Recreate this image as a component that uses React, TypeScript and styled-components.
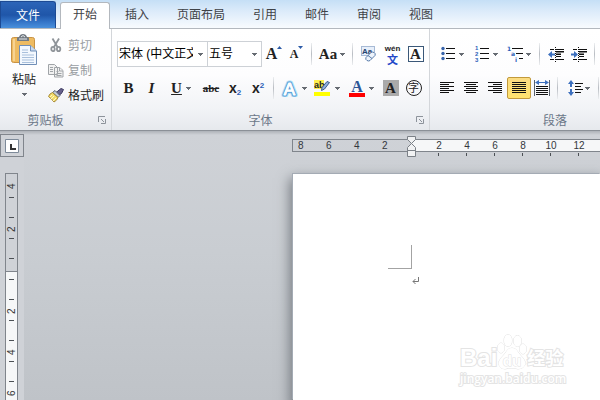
import React from "react";
import styled, { createGlobalStyle, css } from "styled-components";

const uiFont = `"Liberation Sans", "Noto Sans CJK SC", sans-serif`;

const GlobalStyle = createGlobalStyle`
  * { box-sizing: border-box; }
  html, body, #root { height: 100%; }
  body {
    margin: 0;
    overflow: hidden;
    font-family: "Noto Sans CJK SC", sans-serif;
    font-size: 12px;
    line-height: 16px;
    color: #333;
  }
  button {
    margin: 0;
    padding: 0;
    border: 0;
    background: none;
    font: inherit;
    color: inherit;
  }
  svg { display: block; flex: none; }
`;

const Window = styled.div`
  display: flex;
  flex-direction: column;
  height: 100vh;
`;

/* ---------- tabs ---------- */

const TabBar = styled.nav`
  display: flex;
  align-items: flex-end;
  height: 29px;
  flex: none;
  background: linear-gradient(#c5dff6, #dcebfa 40%, #f8fbfe);
  border-bottom: 1px solid #b3b8be;
`;

const FileTab = styled.button`
  width: 56px;
  height: 27px;
  padding-bottom: 1px;
  margin-right: 4px;
  color: #fff;
  border: 1px solid #1c4a94;
  border-bottom: 0;
  border-radius: 0 3px 0 0;
  background: linear-gradient(#2c65b8, #1f56a9 50%, #3373c6 75%, #4a90dc);
`;

const Tab = styled.button<{ $active?: boolean }>`
  height: 28px;
  padding: 0 14px;
  color: #3f4247;
  ${(p) =>
    p.$active &&
    css`
      height: 27px;
      margin-bottom: -1px;
      padding: 0 12px 4px;
      margin-right: 1px;
      border: 1px solid #b3b8be;
      border-bottom: 0;
      border-radius: 3px 3px 0 0;
      background: #fff;
    `}
`;

/* ---------- ribbon ---------- */

const Ribbon = styled.section`
  display: flex;
  flex: none;
  height: 102px;
  background: linear-gradient(#fff, #fdfdfe 45%, #f1f3f6 80%, #e6e9ed);
  border-bottom: 1px solid #8b9097;
`;

const Group = styled.div<{ $width?: number }>`
  display: flex;
  flex-direction: column;
  flex: ${(p) => (p.$width ? `0 0 ${p.$width}px` : "1 0 0")};
  min-width: 0;
  overflow: hidden;
  & + & { border-left: 1px solid #d3d6da; }
`;

const GroupBody = styled.div`
  display: flex;
  flex: 1;
  min-height: 0;
`;

const GroupFooter = styled.div`
  display: flex;
  align-items: center;
  height: 21px;
  padding: 0 5px 0 0;
  color: #6b7788;
`;

const GroupName = styled.span`
  flex: 1;
  padding-right: 7px;
  text-align: center;
`;

const ParagraphName = styled.span`
  padding-left: 113px;
`;

const PasteButton = styled.button`
  display: flex;
  flex-direction: column;
  align-items: center;
  width: 48px;
  padding-top: 5px;
  gap: 6px;
  color: #222;
`;

const ClipList = styled.div`
  display: flex;
  flex-direction: column;
  padding-top: 3px;
`;

const ClipButton = styled.button`
  display: flex;
  align-items: center;
  gap: 4px;
  height: 25px;
  color: #222;
  &:disabled { color: #999da2; }
`;

const Rows = styled.div`
  display: flex;
  flex-direction: column;
  gap: 8px;
  padding: 12px 0 0 5px;
`;

const Row = styled.div`
  display: flex;
  align-items: center;
  height: 26px;
`;

const Tool = styled.button<{ $width: number; $pressed?: boolean; $gap?: number }>`
  display: flex;
  align-items: center;
  justify-content: center;
  flex: none;
  width: ${(p) => p.$width}px;
  height: 22px;
  gap: ${(p) => p.$gap ?? 4}px;
  color: #222;
  ${(p) =>
    p.$pressed &&
    css`
      border: 1px solid #c29a3b;
      border-radius: 2px;
      background: linear-gradient(#fbdc83, #ffe36e);
    `}
`;

const Divider = styled.span<{ $space?: number }>`
  flex: none;
  width: 1px;
  height: 22px;
  margin: 0 ${(p) => p.$space ?? 4}px;
  background: linear-gradient(#eceef0, #b9bdc3, #eceef0);
`;

const Combo = styled.label<{ $width: number }>`
  display: flex;
  align-items: center;
  flex: none;
  width: ${(p) => p.$width}px;
  height: 26px;
  padding: 0 4px 0 1px;
  border: 1px solid #cdd1d6;
  background: #fff;
  & + & { border-left: 0; }
`;

const ComboSelect = styled.select`
  flex: 1;
  min-width: 0;
  margin: 0 5px 0 0;
  padding: 0;
  border: 0;
  appearance: none;
  background: none;
  color: #000;
  font: 12px/18px ${uiFont};
`;

const Serif = styled.span<{ $size?: number; $italic?: boolean; $underline?: boolean }>`
  font: bold ${(p) => p.$size ?? 15}px/16px "Liberation Serif", serif;
  font-style: ${(p) => (p.$italic ? "italic" : "normal")};
  text-decoration: ${(p) => (p.$underline ? "underline" : "none")};
`;

const Strike = styled.s`
  font: bold 11px/14px "Liberation Serif", serif;
`;

const Script = styled.span`
  font: bold 14px/16px "Liberation Sans", sans-serif;
  sub, sup { font-size: 8px; line-height: 1px; color: #2c5fb8; }
  sub { vertical-align: -2px; }
  sup { vertical-align: 5px; }
`;

const Boxed = styled.span<{ $shaded?: boolean }>`
  width: 16px;
  height: 16px;
  text-align: center;
  font: bold 15px/14px "Liberation Serif", serif;
  border: 1px solid ${(p) => (p.$shaded ? "#aaa" : "#3b5878")};
  background: ${(p) => (p.$shaded ? "#aaa" : "#fff")};
`;

const Circled = styled.span`
  width: 16px;
  height: 16px;
  border: 1px solid #222;
  border-radius: 50%;
  font-size: 11px;
  line-height: 13px;
  text-align: center;
`;

const Phonetic = styled.span`
  display: flex;
  flex-direction: column;
  align-items: center;
  font: bold 8px/9px "Liberation Sans", sans-serif;
`;

const PhoneticBase = styled.span`
  color: #2448c8;
  font: bold 11px/12px "Noto Sans CJK SC", sans-serif;
`;

const ColorStack = styled.span`
  display: flex;
  flex-direction: column;
  align-items: center;
`;

const ColorLetter = styled.span`
  color: #2d5596;
  font: bold 16px/13px "Liberation Serif", serif;
`;

const Swatch = styled.span<{ $color: string }>`
  width: 16px;
  height: 4px;
  background: ${(p) => p.$color};
`;

/* ---------- workspace ---------- */

const Workspace = styled.main`
  display: grid;
  grid-template-columns: 24px 1fr;
  flex: 1;
  min-height: 0;
  background: linear-gradient(#aeb2b8, #cfd2d7 4px, #c9cdd2 45%, #bfc3c8);
`;

const Gutter = styled.div`
  display: flex;
  flex-direction: column;
  min-height: 0;
  padding-top: 3px;
  background: linear-gradient(#aeb2b8, #cfd2d7 4px);
`;

const TabSelector = styled.button`
  display: flex;
  align-items: center;
  justify-content: center;
  flex: none;
  width: 24px;
  height: 23px;
  margin-bottom: 16px;
  border: 1px solid #80858c;
`;

const VRuler = styled.div`
  display: flex;
  flex-direction: column;
  flex: 1;
  min-height: 0;
  width: 13px;
  margin-left: 5px;
  overflow: hidden;
  border: 1px solid #80858c;
  border-bottom: 0;
`;

const VSection = styled.div<{ $active?: boolean }>`
  display: flex;
  flex-direction: column;
  align-items: center;
  flex: none;
  ${(p) =>
    p.$active &&
    css`
      background: #f6f7f8;
      border-top: 1px solid #80858c;
    `}
`;

const VCell = styled.div<{ $cut?: boolean }>`
  display: flex;
  flex-direction: column;
  align-items: center;
  justify-content: space-between;
  height: ${(p) => (p.$cut ? 34 : 41)}px;
  padding: ${(p) => (p.$cut ? 7 : 9)}px 0 10px;
  font: 10px/11px "Liberation Sans", sans-serif;
`;

const VDigit = styled.span`
  writing-mode: vertical-rl;
  transform: rotate(180deg);
  height: 8px;
  line-height: 11px;
`;

const VTick = styled.i<{ $before?: number; $after?: number }>`
  width: 5px;
  height: 1px;
  margin-top: ${(p) => p.$before ?? 0}px;
  margin-bottom: ${(p) => p.$after ?? 0}px;
  background: #4c5055;
`;

const Canvas = styled.div`
  display: flex;
  flex-direction: column;
  min-width: 0;
  min-height: 0;
  padding: 8px 0 0 268px;
`;

const HRuler = styled.div`
  position: relative;
  display: flex;
  height: 13px;
  flex: none;
  border: 1px solid #80858c;
  border-right: 0;
  font: 10px/11px "Liberation Sans", sans-serif;
  color: #33373c;
`;

const HMargin = styled.div`
  display: flex;
  width: 119px;
  padding-left: 2px;
`;

const HBody = styled.div`
  display: flex;
  flex: 1;
  min-width: 0;
  padding-left: 13px;
  background: #f6f7f8;
`;

const HCell = styled.span`
  flex: none;
  width: 28px;
  text-align: center;
`;

const LeftCell = styled.span`
  flex: none;
  width: 28px;
  padding-left: 3px;
`;

const IndentMarker = styled.span`
  position: absolute;
  left: 114px;
  top: -4px;
`;

const Ticks = styled.div`
  display: flex;
  flex: none;
  gap: 27px;
  height: 22px;
  padding: 1px 0 0 146px;
`;

const Tick = styled.i`
  width: 1px;
  height: 3px;
  background: #4c5055;
`;

const Page = styled.article`
  position: relative;
  flex: 1;
  min-height: 0;
  margin-left: 1px;
  padding: 71px 0 0 95px;
  background: #fff;
  box-shadow: -1px -1px 0 #a4abb4, 0 7px 12px 3px #74797f;
`;

const CropMark = styled.div`
  width: 24px;
  height: 24px;
  border-right: 1px solid #a3a3a3;
  border-bottom: 1px solid #a3a3a3;
`;

const Paragraph = styled.div`
  padding: 8px 0 0 24px;
`;

const Watermark = styled.div`
  position: absolute;
  right: 30px;
  bottom: 13px;
  width: 110px;
  white-space: nowrap;
  color: #fff;
  -webkit-text-stroke: 2px #e4e4e4;
  paint-order: stroke fill;
`;

const Brand = styled.div`
  display: flex;
  align-items: flex-end;
  height: 36px;
  font: bold 24px/24px "Liberation Sans", sans-serif;
`;

const BrandCn = styled.span`
  font: bold 18px/25px "Noto Sans CJK SC", sans-serif;
`;

const Site = styled.div`
  font: 600 12px/17px "Open Sans", sans-serif;
`;

const Caret = () => (
  <svg width="5" height="3" viewBox="0 0 5 3" shapeRendering="crispEdges">
    <path d="M0 0h5v1H4v1H3v1H2V2H1V1H0z" fill="#666b72" />
  </svg>
);

const Launcher = () => (
  <svg width="8" height="8" viewBox="0 0 8 8" fill="none" stroke="#8d939b">
    <path d="M.5 6V.5H7M3 3l3 3M7.500 3v4.500H3" />
  </svg>
);

const PasteIcon = () => (
  <svg width="26" height="31" viewBox="0 0 26 31">
    <rect x=".5" y="3.500" width="23" height="25" rx="2" fill="#eebb61" stroke="#c99345" />
    <path d="M2 5h2v22H2z" fill="#f7d392" />
    <path d="M6 7V4q0-1 2-1 1-3 4-3t4 3q2 0 2 1v3z" fill="#737b83" />
    <path d="M8 5h8M10 3q2-3 4 0" stroke="#e6e9ec" fill="none" />
    <path d="M8.500 11.500h11l6 5.500v13.500h-17z" fill="#f3f8fe" stroke="#718fb7" />
    <path d="M19.500 11.500V17h6" fill="#c8daf0" stroke="#718fb7" />
    <path d="M11 16h6M11 18.500h6M11 21h12M11 23.500h12M11 26h12M11 28.500h12" stroke="#a9c0dc" />
  </svg>
);

const CutIcon = () => (
  <svg width="16" height="16" viewBox="0 0 16 16" fill="none" stroke="#8f9499" strokeWidth="1.800">
    <path d="M4.500 1.500 9.500 10M11 1.500 6 10" />
    <ellipse cx="5" cy="12" rx="1.700" ry="2.200" />
    <ellipse cx="10.600" cy="12" rx="1.700" ry="2.200" />
  </svg>
);

const CopyIcon = () => (
  <svg width="16" height="16" viewBox="0 0 16 16" fill="#f1f1f1" stroke="#a0a4a8">
    <path d="M.5 2.500h6l3 3v7h-9zM6.500 5.500h5l3.500 3v6.500H6.500z" />
    <path d="M2 5.500h3M2 7.500h3M2 9.500h3M11.500 5.500V9H15M8.500 9.500h2M8.500 11.500h5M8.500 13.500h5" />
  </svg>
);

const BrushIcon = () => (
  <svg width="16" height="16" viewBox="0 0 16 16">
    <path d="m13 1.500 2.500 1-2 4-3 2-3-2.500z" fill="#67618c" stroke="#3d3b61" />
    <path d="m7 3.500 5 5-2 2-5.500-5z" fill="#c3cbd8" stroke="#59616e" />
    <path d="m4.500 5.500 5.500 5q-1 3-4 4.500-2-3-5.500-5.500 1-3 4-4z" fill="#f3dc6c" stroke="#a88a35" />
    <path d="m4 8-2 2M6 9l-3 3M8 11l-3 3" stroke="#fff9c4" />
  </svg>
);

const Arrow = ({ down }: { down?: boolean }) => (
  <svg width="5" height="16" viewBox="0 0 5 16" fill="#2b5aa7">
    <path d={down ? "M0 0h5L2.500 3z" : "M0 3h5L2.500 0z"} />
  </svg>
);

const EraserIcon = () => (
  <svg width="16" height="16" viewBox="0 0 16 16">
    <rect x=".5" y=".5" width="13" height="9" fill="#e7effa" stroke="#a7bad5" />
    <text x="1" y="8" fontSize="8" fontWeight="bold" fontFamily="Liberation Sans" fill="#25446f">Aa</text>
    <path d="m5 11.500 5-5q1-1 3 0t1 3l-5 5q-1 1-3 0t-1-3z" fill="#eef4fc" stroke="#587ba9" />
    <path d="m7 9.500 4 3" stroke="#587ba9" />
  </svg>
);

const GlowA = () => (
  <svg width="17" height="17" viewBox="0 0 17 17">
    <g fontFamily="Liberation Sans" fontSize="17" textAnchor="middle" strokeLinejoin="round">
      <text x="8.500" y="15" stroke="#b3def5" strokeWidth="5" fill="none">A</text>
      <text x="8.500" y="15" stroke="#4f9bd6" strokeWidth="3" fill="none">A</text>
      <text x="8.500" y="15" stroke="#fff" strokeWidth="1" fill="#fff">A</text>
    </g>
  </svg>
);

const HighlightIcon = () => (
  <svg width="17" height="16" viewBox="0 0 17 16">
    <path d="M0 0h10v9H0z" fill="#fff04d" />
    <text x="0" y="8" fontSize="9" fontWeight="bold" fontFamily="Liberation Sans" fill="#222">ab</text>
    <path d="m13 1.500 2.500 1-5 6.500-3 1.500.5-3z" fill="#8fb0de" stroke="#3c5c8c" />
    <path d="M0 12h16v4H0z" fill="#ff0" />
  </svg>
);

const lineColor = "#111";

const ListIcon = ({ numbered }: { numbered?: boolean }) => (
  <svg width="14" height="16" viewBox="0 0 14 16">
    {numbered ? (
      <g fontSize="6" fontWeight="bold" fontFamily="Liberation Sans" fill="#2c5fb8">
        <text x="0" y="4">1</text>
        <text x="0" y="10">2</text>
        <text x="0" y="16">3</text>
      </g>
    ) : (
      <g fill="#3763aa">
        <circle cx="2" cy="2.500" r="1.700" />
        <circle cx="2" cy="7.500" r="1.700" />
        <circle cx="2" cy="12.500" r="1.700" />
      </g>
    )}
    <path d="M5 2.500h9M5 7.500h9M5 12.500h9" stroke={lineColor} />
  </svg>
);

const MultiIcon = () => (
  <svg width="16" height="16" viewBox="0 0 16 16">
    <g fontSize="6" fontWeight="bold" fontFamily="DejaVu Sans" fill="#2c5fb8">
      <text x="0" y="5">1</text>
      <text x="4" y="10">a</text>
      <text x="8" y="16">i</text>
    </g>
    <path d="M5 2.500h11M9 7.500h7M12 12.500h4" stroke={lineColor} />
  </svg>
);

const IndentIcon = ({ right }: { right?: boolean }) => (
  <svg width="16" height="15" viewBox="0 0 16 15">
    <path d="M2 2.500h4M8 2.500h8M8 9.500h5M2 12.500h4M8 12.500h8" stroke={lineColor} />
    <path d="M8 4h8v1.500H8zM8 6.500h5V8H8z" fill={lineColor} />
    <path d="M7.500 0v15" stroke={lineColor} strokeDasharray="1 1" />
    <path d={right ? "M0 6.500h3V4l4 3.500L3 11V8.500H0z" : "M7 6.500H4V4L0 7.500 4 11V8.500h3z"} fill="#3d70be" />
  </svg>
);

type Align = "left" | "center" | "right" | "justify";
const alignPaths: Record<Align, string> = {
  left: "M0 .5h14M0 2.500h9M0 4.500h14M0 6.500h9M0 8.500h14M0 10.500h9",
  center: "M0 .5h14M2 2.500h10M0 4.500h14M2 6.500h10M0 8.500h14M2 10.500h10",
  right: "M0 .5h14M5 2.500h9M0 4.500h14M5 6.500h9M0 8.500h14M5 10.500h9",
  justify: "M0 .5h14M0 2.500h14M0 4.500h14M0 6.500h14M0 8.500h14M0 10.500h14",
};
const AlignIcon = ({ kind }: { kind: Align }) => (
  <svg width="14" height="12" viewBox="0 0 14 12">
    <path d={alignPaths[kind]} stroke={lineColor} />
  </svg>
);

const DistributeIcon = () => (
  <svg width="16" height="16" viewBox="0 0 16 16">
    <path d="M.5 0v16M15.500 0v16" stroke="#59616c" />
    <path d="M2 6.500h12M2 8.500h12M2 10.500h12M2 12.500h12M2 14.500h12" stroke={lineColor} />
    <path d="m1 2.500 4-2.500v2h6V0l4 2.500L11 5V3H5v2z" fill="#3d70be" />
  </svg>
);

const SpacingIcon = () => (
  <svg width="15" height="16" viewBox="0 0 15 16">
    <path d="M3 0 6 4H4v3H2V4H0zM3 16l3-4H4V9H2v3H0z" fill="#3d70be" />
    <path d="M7 3.500h8M7 6.500h6M7 9.500h8M7 12.500h6" stroke={lineColor} />
  </svg>
);

const MarkerIcon = () => (
  <svg width="9" height="21" viewBox="0 0 9 21" fill="#f1f2f3" stroke="#7b8087">
    <path d="M.5.500h8v3L4.500 7.500.5 3.500zM4.500 7.500l4 4v3h-8v-3zM.5 14.500h8v6h-8z" />
  </svg>
);

const Paw = () => (
  <svg width="30" height="36" viewBox="0 0 30 36" fill="#fff" stroke="#e1e1e1">
    <ellipse cx="4" cy="14" rx="3.500" ry="5" />
    <ellipse cx="11" cy="6.500" rx="4" ry="6" />
    <ellipse cx="20.500" cy="7" rx="4" ry="5.500" />
    <ellipse cx="26" cy="15" rx="3.500" ry="5" />
    <path d="M15 14q4 0 6 4 2 3 5 6 3 3 2 7-2 4-7 4-3-1-6-1-4 0-7 1-5 0-6-4-1-4 2-7 3-3 5-6 2-4 6-4z" />
    <text x="15" y="32" fontSize="15" fontWeight="bold" fontFamily="Liberation Sans" textAnchor="middle">du</text>
  </svg>
);

const tabs = ["插入", "页面布局", "引用", "邮件", "审阅", "视图"];
const aligns: Align[] = ["left", "center", "right"];

const Ruled = ({ digit, cut }: { digit: string; cut?: boolean }) => (
  <VCell $cut={cut}>
    {!cut && <VTick />}
    <VDigit>{digit}</VDigit>
    <VTick />
  </VCell>
);

export default function App() {
  return (
    <Window>
      <GlobalStyle />
      <TabBar>
        <FileTab>文件</FileTab>
        <Tab $active>开始</Tab>
        {tabs.map((name) => (
          <Tab key={name}>{name}</Tab>
        ))}
      </TabBar>

      <Ribbon>
        <Group $width={111}>
          <GroupBody>
            <PasteButton>
              <PasteIcon />
              粘贴
              <Caret />
            </PasteButton>
            <ClipList>
              <ClipButton disabled><CutIcon />剪切</ClipButton>
              <ClipButton disabled><CopyIcon />复制</ClipButton>
              <ClipButton><BrushIcon />格式刷</ClipButton>
            </ClipList>
          </GroupBody>
          <GroupFooter>
            <GroupName>剪贴板</GroupName>
            <Launcher />
          </GroupFooter>
        </Group>

        <Group $width={318}>
          <GroupBody>
            <Rows>
              <Row>
                <Combo $width={91}>
                  <ComboSelect aria-label="字体" defaultValue="song">
                    <option value="song">宋体 (中文正文)</option>
                  </ComboSelect>
                  <Caret />
                </Combo>
                <Combo $width={54}>
                  <ComboSelect aria-label="字号" defaultValue="5">
                    <option value="5">五号</option>
                  </ComboSelect>
                  <Caret />
                </Combo>
                <Tool $width={24} $gap={0} aria-label="增大字体">
                  <Serif $size={16}>A</Serif>
                  <Arrow />
                </Tool>
                <Tool $width={21} $gap={0} aria-label="缩小字体">
                  <Serif $size={12}>A</Serif>
                  <Arrow down />
                </Tool>
                <Divider />
                <Tool $width={32} $gap={3} aria-label="更改大小写">
                  <Serif>Aa</Serif>
                  <Caret />
                </Tool>
                <Divider />
                <Tool $width={24} aria-label="清除格式"><EraserIcon /></Tool>
                <Tool $width={23} aria-label="拼音指南">
                  <Phonetic>wén<PhoneticBase>文</PhoneticBase></Phonetic>
                </Tool>
                <Tool $width={23} aria-label="字符边框"><Boxed>A</Boxed></Tool>
              </Row>
              <Row>
                <Tool $width={23} aria-label="加粗"><Serif>B</Serif></Tool>
                <Tool $width={23} aria-label="倾斜"><Serif $italic>I</Serif></Tool>
                <Tool $width={36} aria-label="下划线">
                  <Serif $underline>U</Serif>
                  <Caret />
                </Tool>
                <Tool $width={24} aria-label="删除线"><Strike>abc</Strike></Tool>
                <Tool $width={24} aria-label="下标"><Script>x<sub>2</sub></Script></Tool>
                <Tool $width={22} aria-label="上标"><Script>x<sup>2</sup></Script></Tool>
                <Divider />
                <Tool $width={32} aria-label="文本效果"><GlowA /><Caret /></Tool>
                <Tool $width={34} aria-label="突出显示"><HighlightIcon /><Caret /></Tool>
                <Tool $width={35} aria-label="字体颜色">
                  <ColorStack>
                    <ColorLetter>A</ColorLetter>
                    <Swatch $color="#f00" />
                  </ColorStack>
                  <Caret />
                </Tool>
                <Tool $width={23} aria-label="字符底纹"><Boxed $shaded>A</Boxed></Tool>
                <Tool $width={23} aria-label="带圈字符"><Circled>字</Circled></Tool>
              </Row>
            </Rows>
          </GroupBody>
          <GroupFooter>
            <GroupName>字体</GroupName>
            <Launcher />
          </GroupFooter>
        </Group>

        <Group>
          <GroupBody>
            <Rows>
              <Row>
                <Tool $width={34} aria-label="项目符号"><ListIcon /><Caret /></Tool>
                <Tool $width={34} aria-label="编号"><ListIcon numbered /><Caret /></Tool>
                <Tool $width={32} $gap={3} aria-label="多级列表"><MultiIcon /><Caret /></Tool>
                <Divider />
                <Tool $width={24} aria-label="减少缩进量"><IndentIcon /></Tool>
                <Tool $width={22} aria-label="增加缩进量"><IndentIcon right /></Tool>
                <Divider />
              </Row>
              <Row>
                {aligns.map((kind) => (
                  <Tool key={kind} $width={24} aria-label={kind}><AlignIcon kind={kind} /></Tool>
                ))}
                <Tool $width={24} $pressed aria-label="两端对齐"><AlignIcon kind="justify" /></Tool>
                <Tool $width={22} aria-label="分散对齐"><DistributeIcon /></Tool>
                <Divider />
                <Tool $width={34} $gap={2} aria-label="行距"><SpacingIcon /><Caret /></Tool>
                <Divider $space={2} />
              </Row>
            </Rows>
          </GroupBody>
          <GroupFooter>
            <ParagraphName>段落</ParagraphName>
          </GroupFooter>
        </Group>
      </Ribbon>

      <Workspace>
        <Gutter>
          <TabSelector aria-label="制表符">
            <svg width="14" height="14" viewBox="0 0 14 14">
              <path d="M.5.500h13v13H.5z" fill="#fff" stroke="#7d8a99" />
              <path d="M6 5v5h5" fill="none" stroke="#333" strokeWidth="2" />
            </svg>
          </TabSelector>
          <VRuler>
            <VSection>
              <Ruled digit="4" cut />
              <Ruled digit="2" />
              <VTick $before={9} $after={12} />
            </VSection>
            <VSection $active>
              <VTick $before={7} $after={10} />
              <Ruled digit="2" />
              <Ruled digit="4" />
              <Ruled digit="6" />
            </VSection>
          </VRuler>
        </Gutter>
        <Canvas>
          <HRuler>
            <HMargin>
              {["8", "6", "4", "2"].map((n) => (
                <LeftCell key={n}>{n}</LeftCell>
              ))}
            </HMargin>
            <HBody>
              {["2", "4", "6", "8", "10", "12"].map((n) => (
                <HCell key={n}>{n}</HCell>
              ))}
            </HBody>
            <IndentMarker><MarkerIcon /></IndentMarker>
          </HRuler>
          <Ticks>
            {[2, 4, 6, 8, 10, 12].map((n) => (
              <Tick key={n} />
            ))}
          </Ticks>
          <Page>
            <CropMark />
            <Paragraph>
              <svg width="8" height="9" viewBox="0 0 8 9" fill="none" stroke="#777">
                <path d="M6.500 0v4.500H1M3.500 2 1 4.500 3.500 7" />
              </svg>
            </Paragraph>
            <Watermark>
              <Brand>
                Bai
                <Paw />
                <BrandCn>经验</BrandCn>
              </Brand>
              <Site>jingyan.baidu.com</Site>
            </Watermark>
          </Page>
        </Canvas>
      </Workspace>
    </Window>
  );
}
